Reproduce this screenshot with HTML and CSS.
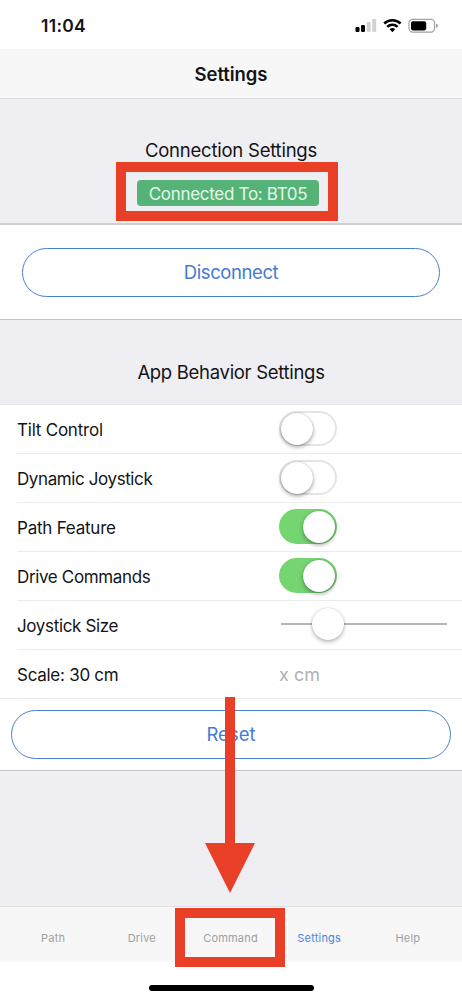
FILE: index.html
```html
<!DOCTYPE html>
<html lang="en">
<head>
<meta charset="utf-8">
<title>Settings</title>
<link rel="stylesheet" href="styles.css">
</head>
<body>
<div class="phone">
  <div class="status">
    <span class="time">11:04</span>
    <svg class="status-icons" width="84" height="18" viewBox="0 0 84 18">
      <g fill="#000"><rect x="0.5" y="10" width="4" height="5" rx="1.2"/><rect x="6" y="8" width="4" height="7" rx="1.2"/></g>
      <g fill="#d2d2d2"><rect x="11.7" y="5" width="4" height="10" rx="1.2"/><rect x="17.2" y="2" width="4" height="13" rx="1.2"/></g>
      <g fill="none" stroke="#000" stroke-width="2.5">
        <path d="M29.2 6.5a11.8 11.8 0 0 1 16.4 0"/>
        <path d="M32.2 9.9a7.4 7.4 0 0 1 10.4 0"/>
      </g>
      <path d="M34.6 12.3a4 4 0 0 1 5.6 0L37.4 15.2Z"/>
      <rect x="54" y="2.3" width="25.6" height="12.9" rx="3.6" fill="#fff" stroke="#a3a3a3" stroke-width="1.2"/>
      <rect x="56" y="4.2" width="15.2" height="9.2" rx="1.8"/>
      <path d="M81 6.5q2 .8 2 2.3T81 11Z" fill="#a3a3a3"/>
    </svg>
  </div>
  <header class="nav"><span class="t nav-title">Settings</span></header>
  <section class="head connection">
    <h2 class="t title-connection">Connection Settings</h2>
    <div class="badge"><span class="t badge-text">Connected To: BT05</span><i class="highlight highlight-badge"></i></div>
  </section>
  <div class="disconnect-panel"><button class="pill"><span class="t disconnect">Disconnect</span></button></div>
  <section class="head behavior"><h2 class="t title-behavior">App Behavior Settings</h2></section>
  <div class="rows">
    <div class="row"><span class="label tilt">Tilt Control</span><span class="switch"></span></div>
    <div class="row"><span class="label dynamic">Dynamic Joystick</span><span class="switch"></span></div>
    <div class="row"><span class="label path">Path Feature</span><span class="switch on"></span></div>
    <div class="row"><span class="label drive">Drive Commands</span><span class="switch on"></span></div>
    <div class="row"><span class="label size">Joystick Size</span><span class="slider"><i class="thumb"></i></span></div>
    <div class="row last"><span class="label scale">Scale: 30 cm</span><span class="placeholder">x cm</span></div>
  </div>
  <div class="reset-panel"><button class="pill"><span class="t reset">Reset</span></button></div>
  <div class="filler"></div>
  <nav class="tabs">
    <span class="tab">Path</span><span class="tab">Drive</span><span class="tab">Command<i class="highlight highlight-tab"></i></span><span class="tab active">Settings</span><span class="tab">Help</span>
  </nav>
  <div class="home"><i class="home-bar"></i></div>
  <svg class="arrow" width="50" height="196" viewBox="0 0 50 196"><path d="M20 0H30V146H50L25 196L0 146H20Z" fill="#e93f26"/></svg>
</div>
</body>
</html>
```
FILE: styles.css
```css
* { box-sizing: border-box; }
body { margin: 0; background: #fff; font-family: Inter, "Liberation Sans", sans-serif; color: #141416; }
.phone { position: relative; width: 462px; height: 1000px; overflow: hidden; display: flex; flex-direction: column; }
.phone > * { flex-shrink: 0; }
.t, .label, .tab, .placeholder, .time { white-space: nowrap; }
.status { height: 49px; display: flex; justify-content: space-between; padding: 17px 23px 0 41px; }
.time { font-size: 17.5px; line-height: 18px; font-weight: 600; letter-spacing: 0.3px; }
.nav { height: 50px; display: flex; justify-content: center; align-items: center; background: #f7f7f7; border-bottom: 1px solid #dddde1; }
.nav-title { font-size: 18.5px; font-weight: 600; letter-spacing: -0.05px; }
.head { background: #efeef3; display: flex; flex-direction: column; align-items: center; }
.connection { height: 126px; padding-top: 39px; border-bottom: 2px solid #d0d0d4; }
.behavior { height: 84px; padding-top: 40px; }
h2 { margin: 0; font-size: 18.5px; line-height: 24px; font-weight: 400; letter-spacing: -0.23px; }
.title-behavior { letter-spacing: -0.3px; }
.badge { position: relative; margin: 18px 6px 0 0; width: 182px; height: 26px; border-radius: 4px; background: #55b377; color: #e4f8e7; display: flex; align-items: center; justify-content: center; font-size: 17px; letter-spacing: -0.3px; }
.badge-text { padding-top: 1px; }
.highlight { position: absolute; border: 10px solid #e93f26; }
.highlight-badge { left: -21px; top: -18px; width: 222px; height: 59px; }
.disconnect-panel { height: 95px; padding: 23px 22px 0; border-bottom: 1px solid #c6c6ca; }
.pill { display: flex; width: 100%; height: 49px; padding: 0 0 2px; align-items: center; justify-content: center; border: 1px solid #4b80cf; border-radius: 25px; background: #fff; color: #437bd5; font: 400 18.5px Inter, "Liberation Sans", sans-serif; }
.disconnect { letter-spacing: -0.4px; }
.rows { border-top: 1px solid #e9e9ed; }
.row { height: 49px; margin-left: 17px; display: grid; grid-template-columns: 262px 1fr; align-items: center; border-bottom: 1px solid #ebebed; }
.row.last { margin-left: 0; padding-left: 17px; }
.label, .placeholder { font-size: 17px; line-height: 22px; padding-top: 2px; }
.tilt, .path { letter-spacing: -0.22px; }
.dynamic { letter-spacing: -0.4px; }
.drive, .size { letter-spacing: -0.35px; }
.scale { letter-spacing: -0.27px; }
.placeholder { color: #b0b0b2; font-size: 18px; letter-spacing: 0; }
.switch { width: 58px; height: 35px; margin-bottom: 1px; border-radius: 18px; border: 2px solid #e4e4e5; display: flex; align-items: center; }
.switch::before { content: ""; width: 32px; height: 32px; flex: none; border-radius: 50%; background: #fff; box-shadow: 0 2px 4px rgba(0,0,0,.35), 0 0 1px rgba(0,0,0,.3); }
.switch.on { background: #74d571; border-color: #74d571; justify-content: flex-end; }
.slider { margin-left: 2px; width: 166px; height: 2px; background: #b6b6b6; display: flex; align-items: center; margin-top: -3px; }
.thumb { width: 32px; height: 32px; margin-left: 31px; border-radius: 50%; background: #fff; box-shadow: 0 2px 4px rgba(0,0,0,.28), 0 0 1px rgba(0,0,0,.25); }
.reset-panel { height: 72px; padding: 11px 11px 0; border-bottom: 1px solid #c6c6ca; }
.filler { height: 135px; background: #efeef3; }
.tabs { height: 56px; background: #f7f7f7; border-top: 1px solid #dfdfe4; display: grid; grid-template-columns: repeat(5, 88.7px); justify-content: center; align-items: center; padding: 7px 1px 0 0; }
.tab { position: relative; text-align: center; font-size: 11px; line-height: 14px; letter-spacing: 0.2px; color: #a0a0a0; }
.tab.active { color: #4a84e0; }
.highlight-tab { left: -11px; top: -23px; width: 110px; height: 59px; }
.home { flex: 1; display: flex; justify-content: center; padding-top: 23px; }
.home-bar { width: 165px; height: 6px; border-radius: 3px; background: #000; }
.arrow { position: absolute; left: 205px; top: 697px; }
```
